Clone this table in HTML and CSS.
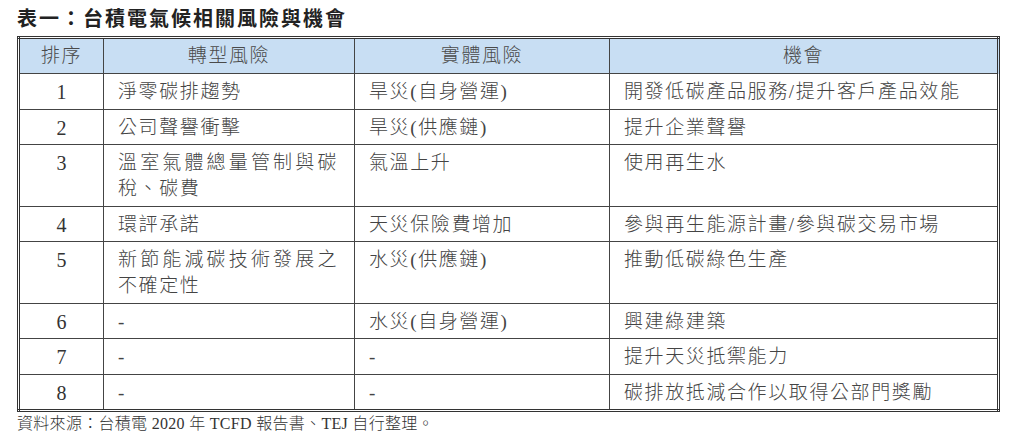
FILE: index.html
```html
<!DOCTYPE html>
<html lang="zh-Hant">
<head>
<meta charset="utf-8">
<link rel="stylesheet" href="styles.css">
</head>
<body>
<h1 class="title">表一：台積電氣候相關風險與機會</h1>
<table class="risk-table">
  <colgroup>
    <col class="c-no">
    <col class="c-trans">
    <col class="c-phys">
    <col class="c-opp">
  </colgroup>
  <thead>
    <tr><th>排序</th><th>轉型風險</th><th>實體風險</th><th>機會</th></tr>
  </thead>
  <tbody>
    <tr><td class="no">1</td><td class="jt">淨零碳排趨勢</td><td>旱災(自身營運)</td><td>開發低碳產品服務/提升客戶產品效能</td></tr>
    <tr><td class="no">2</td><td class="jt">公司聲譽衝擊</td><td>旱災(供應鏈)</td><td>提升企業聲譽</td></tr>
    <tr><td class="no">3</td><td class="jt">溫室氣體總量管制與碳稅、碳費</td><td>氣溫上升</td><td>使用再生水</td></tr>
    <tr><td class="no">4</td><td class="jt">環評承諾</td><td>天災保險費增加</td><td>參與再生能源計畫/參與碳交易市場</td></tr>
    <tr><td class="no">5</td><td class="jt">新節能減碳技術發展之不確定性</td><td>水災(供應鏈)</td><td>推動低碳綠色生產</td></tr>
    <tr><td class="no">6</td><td class="jt">-</td><td>水災(自身營運)</td><td>興建綠建築</td></tr>
    <tr><td class="no">7</td><td class="jt">-</td><td>-</td><td>提升天災抵禦能力</td></tr>
    <tr><td class="no">8</td><td class="jt">-</td><td>-</td><td>碳排放抵減合作以取得公部門獎勵</td></tr>
  </tbody>
</table>
<p class="note">資料來源：台積電 2020 年 TCFD 報告書、TEJ 自行整理。</p>
</body>
</html>
```
FILE: styles.css
```css
html, body {
  margin: 0;
  background: #ffffff;
}
body {
  padding: 5px 17px 0;
  font-family: "Liberation Serif", "Noto Sans CJK TC", serif;
  color: #333;
}
.title {
  margin: 0 0 5px;
  font-family: "Noto Sans CJK TC", sans-serif;
  font-size: 20px;
  font-weight: 700;
  line-height: 26px;
  letter-spacing: 2px;
  color: #222;
}
.risk-table {
  width: 980px;
  border-collapse: collapse;
  border: 3px double #333;
  table-layout: fixed;
}
.c-no { width: 85px; }
.c-trans { width: 251px; }
.c-phys { width: 255px; }
.c-opp { width: 389px; }
.risk-table th,
.risk-table td {
  border: 1.5px solid #444;
  font-size: 19px;
  line-height: 26px;
  letter-spacing: 1.6px;
  font-weight: 300;
  color: #444;
  vertical-align: top;
}
.risk-table th {
  background: #c8def3;
  text-align: center;
  padding: 4px 6px 4px;
  color: #4a4a4a;
}
.risk-table td {
  padding: 5px 16px 3.5px 14px;
  text-align: left;
}
.risk-table td.no {
  text-align: center;
  font-size: 20px;
  letter-spacing: 0;
  padding-left: 6px;
  padding-right: 6px;
  color: #333;
}
.risk-table td.jt {
  text-align: justify;
}
.note {
  margin: 1px 0 0;
  font-size: 16px;
  line-height: 22px;
  letter-spacing: 0.3px;
  font-weight: 300;
  color: #333;
}
```
